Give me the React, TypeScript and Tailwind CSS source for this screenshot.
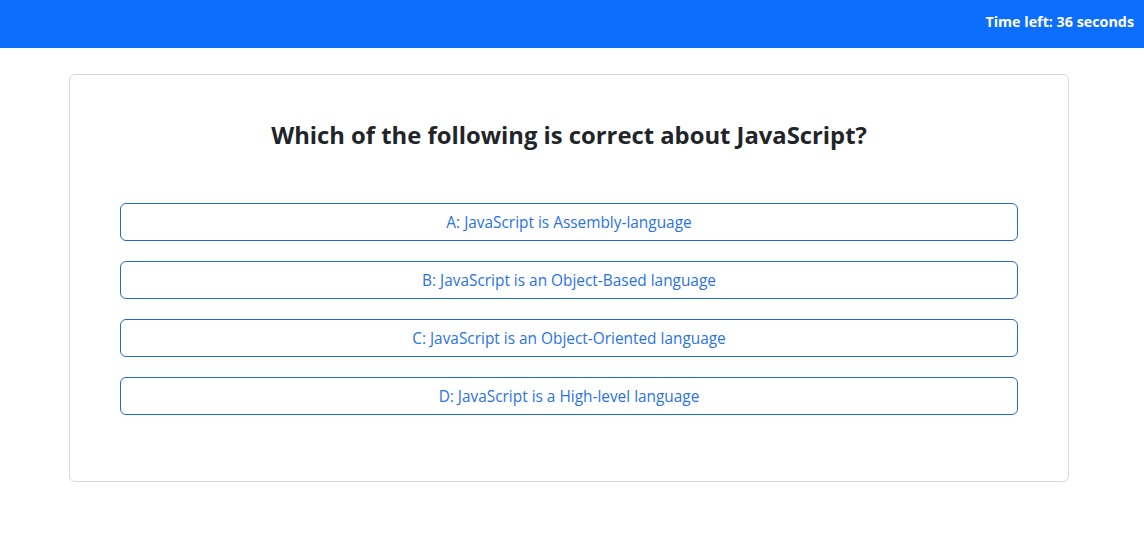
export default function App() {
  const options = [
    "A: JavaScript is Assembly-language",
    "B: JavaScript is an Object-Based language",
    "C: JavaScript is an Object-Oriented language",
    "D: JavaScript is a High-level language",
  ];
  return (
    <div className="min-h-[554px] bg-white" style={{ fontFamily: '"Open Sans", "Noto Sans", sans-serif' }}>
      <div className="h-[48px] bg-[#0d6efd] flex items-center justify-end pr-[10px] pb-[4px]">
        <span className="text-white font-bold text-[14.3px]">Time left: 36 seconds</span>
      </div>
      <div className="pt-[26px] pl-[69px]">
        <div className="w-[1000px] h-[408px] border border-[#d6d9dc] rounded-[6px] px-[50px] pt-[44px]">
          <h3 className="text-center text-[23.8px] font-bold text-[#212529] leading-[32px]">
            Which of the following is correct about JavaScript?
          </h3>
          <div className="mt-[52px] flex flex-col gap-[20px]">
            {options.map((o) => (
              <button
                key={o}
                className="h-[38px] w-full border border-[#1f6bd6] rounded-[6px] text-[#2a72e6] text-[15.4px] bg-white pt-[2px]"
              >
                {o}
              </button>
            ))}
          </div>
        </div>
      </div>
    </div>
  );
}
